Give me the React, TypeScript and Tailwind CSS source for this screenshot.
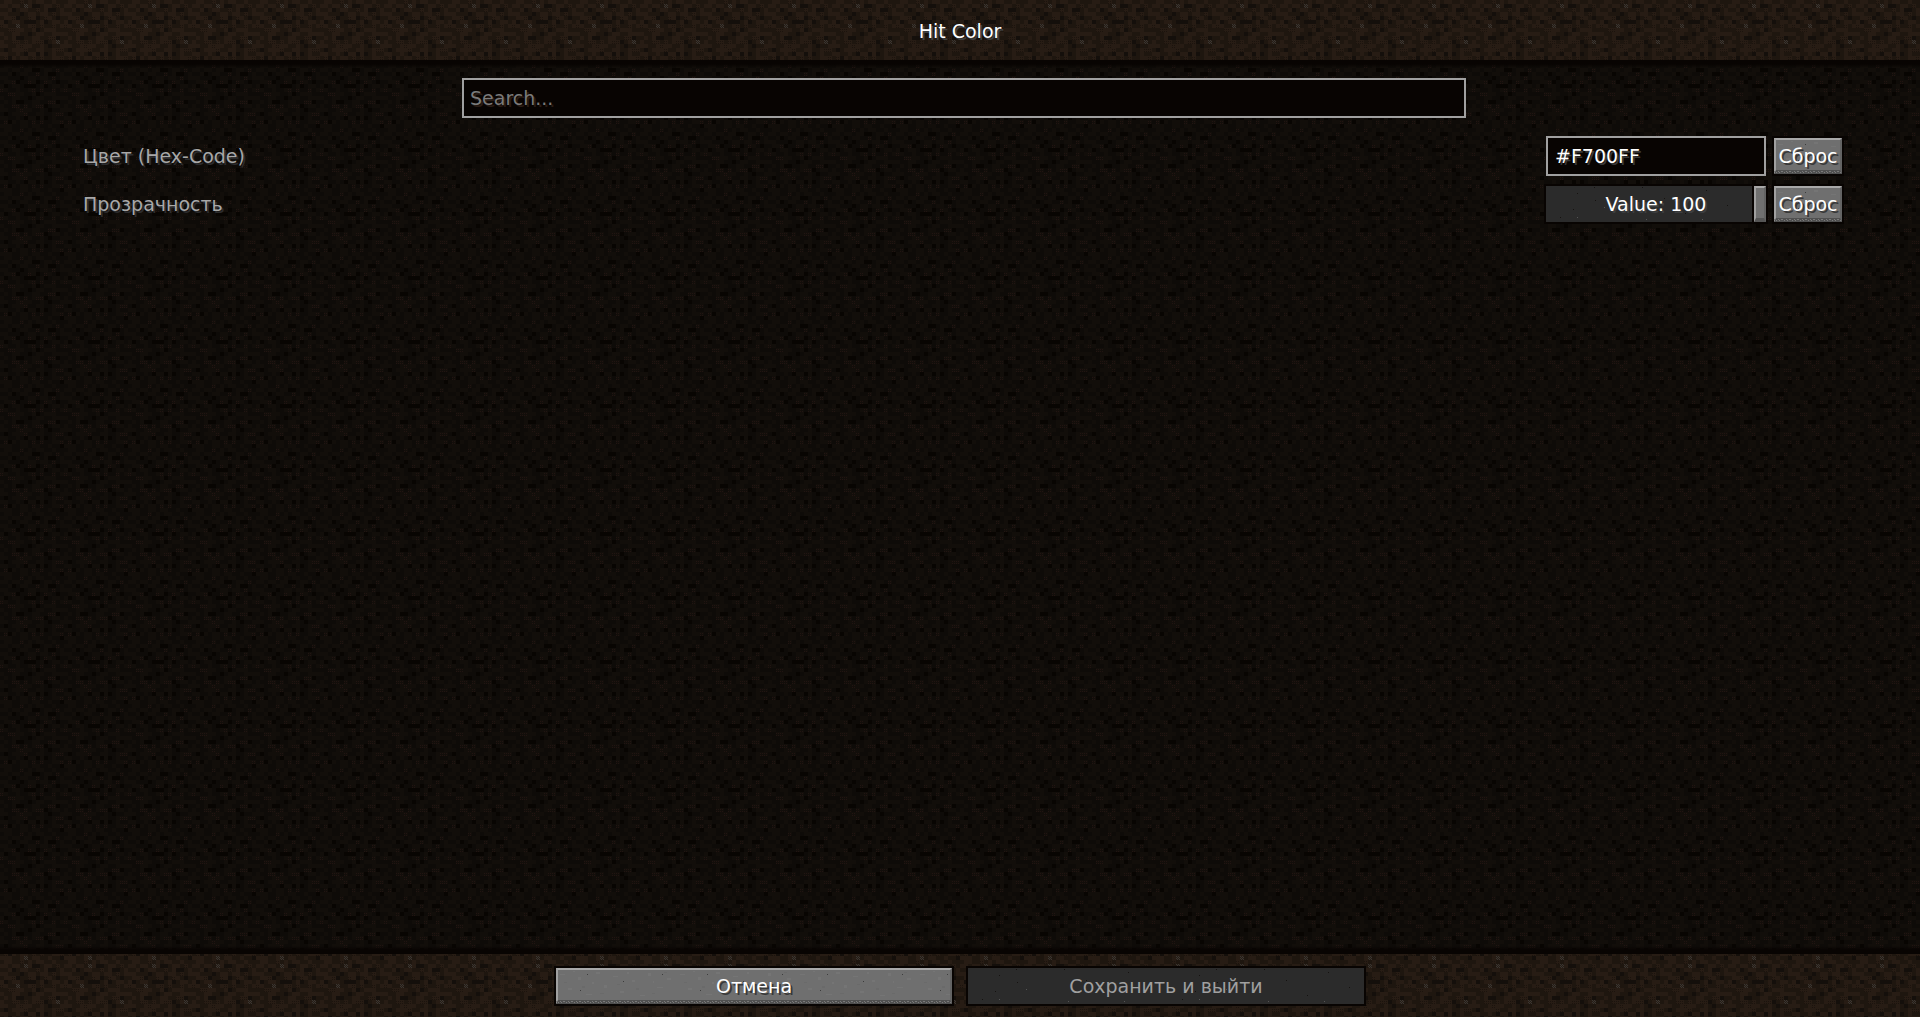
import { useState, type ReactNode } from 'react';

// d = dark, m = mid, l = light, s = stone speckle, r = dotted cell
const TILE = [
  'mllmmrmlmllmmlmm',
  'llmllmslddmllmrm',
  'mmldmllmmrmlddml',
  'llmmmdmllmllmrml',
  'mllrdmmrldmrlmdm',
  'ldmllmdddmldmllm',
  'rlmmsmmlrmrmmrml',
  'mmrrllmmldmlllmm',
  'lmmllmmdmllmmlll',
  'mlmlddmmllmmrrdm',
  'lmmrrmrmlrrdmlsm',
  'llmmlrllmmlmdmml',
  'mdmlllrmmllmmlrr',
  'llmmlmdlldldmlmm',
  'mrdlmllmrmrmmllr',
  'lllmmlsmllmmlmmd',
];

const LIT = { base: '#20170f', d: '#140f0b', m: '#1e160f', l: '#271c14', s: '#393632', r: '#1b130d' };
const DIM = { base: '#0f0c08', d: '#080502', m: '#0e0b08', l: '#120e0a', s: '#120e0a', r: '#211411' };

function cellColor(c: string, p: typeof LIT) {
  if (c === 'd') return p.d;
  if (c === 'm') return p.m;
  return p.l;
}

function Dirt({ id, dim, shift }: { id: string; dim: boolean; shift: number }) {
  const p = dim ? DIM : LIT;
  return (
    <svg aria-hidden="true" className="pointer-events-none absolute inset-0 h-full w-full" shapeRendering="crispEdges">
      <defs>
        <pattern id={id} y={shift} width="64" height="64" patternUnits="userSpaceOnUse">
          <rect width="64" height="64" fill={p.base} />
          {TILE.flatMap((row, y) =>
            [...row].map((c, x) => (
              <g key={`${x}-${y}`} transform={`translate(${x * 4} ${y * 4})`}>
                <rect width="4" height="4" fill={cellColor(c, p)} />
                {c === 's' && (
                  <path
                    d="M0 0h1v1h-1zM2 0h1v1h-1zM1 1h1v1h-1zM3 1h1v1h-1zM0 2h1v1h-1zM2 2h1v1h-1zM1 3h1v1h-1zM3 3h1v1h-1z"
                    fill={p.s}
                  />
                )}
                {c === 'r' && <path d="M0 1h1v1h-1zM2 1h1v1h-1zM0 3h1v1h-1zM2 3h1v1h-1z" fill={p.r} />}
              </g>
            )),
          )}
        </pattern>
      </defs>
      <rect width="100%" height="100%" fill={`url(#${id})`} />
    </svg>
  );
}

function Stone() {
  return (
    <svg aria-hidden="true" className="pointer-events-none absolute inset-0 h-full w-full" shapeRendering="crispEdges">
      <defs>
        <pattern id="stone" width="120" height="36" patternUnits="userSpaceOnUse">
          <path
            fill="#757575"
            d="M4 6h5v1h-5zM12 20h4v2h-4zM22 9h3v3h-3zM30 26h6v1h-6zM40 4h4v2h-4zM48 17h3v3h-3zM57 8h5v1h-5zM64 23h4v2h-4zM76 12h3v2h-3zM84 27h5v1h-5zM92 5h3v3h-3zM101 19h6v1h-6zM111 10h4v2h-4zM17 3h2v1h-2zM36 14h2v2h-2zM71 4h2v2h-2zM97 13h1v2h-1z"
          />
          <path
            fill="#6a6a6a"
            d="M8 14h3v1h-3zM26 18h3v2h-3zM44 25h4v1h-4zM61 16h3v1h-3zM80 20h3v2h-3zM96 25h3v1h-3zM108 4h3v1h-3z"
          />
          <path fill="#3c3c3c" d="M31 6h1v1h-1zM67 13h1v1h-1zM24 22h1v1h-1zM106 6h1v1h-1z" />
        </pattern>
      </defs>
      <rect width="100%" height="100%" fill="url(#stone)" />
    </svg>
  );
}

function Grit() {
  return (
    <svg aria-hidden="true" className="pointer-events-none absolute inset-x-0 bottom-0 h-1 w-full" shapeRendering="crispEdges">
      <defs>
        <pattern id="grit" width="8" height="4" patternUnits="userSpaceOnUse">
          <path fill="#7a7a7a" d="M0 1h1v1h-1zM2 2h1v1h-1zM4 1h1v1h-1zM5 2h1v1h-1zM7 1h1v1h-1z" />
        </pattern>
      </defs>
      <rect width="100%" height="100%" fill="url(#grit)" />
    </svg>
  );
}

function Specks() {
  return (
    <svg aria-hidden="true" className="pointer-events-none absolute inset-0 h-full w-full" shapeRendering="crispEdges">
      <defs>
        <pattern id="specks" width="200" height="36" patternUnits="userSpaceOnUse">
          <path
            fill="#151210"
            d="M14 31h1v1h-1zM31 7h1v1h-1zM48 1h1v1h-1zM49 14h1v1h-1zM27 23h1v1h-1zM96 1h1v1h-1zM139 27h1v1h-1zM160 4h1v1h-1zM181 19h1v1h-1zM118 12h1v1h-1z"
          />
          <path fill="#555555" d="M31 31h1v1h-1zM58 21h1v1h-1zM100 33h1v1h-1zM156 33h1v1h-1z" />
        </pattern>
      </defs>
      <rect width="100%" height="100%" fill="url(#specks)" />
    </svg>
  );
}

function StoneButton({ className, children }: { className: string; children: ReactNode }) {
  return (
    <button
      type="button"
      className={`relative flex h-9 items-center justify-center bg-[#6f6f6f] whitespace-nowrap text-white outline-2 outline-[#080402] [text-shadow:2px_2px_0_#383838] ${className}`}
    >
      <Stone />
      <span
        aria-hidden="true"
        className="absolute inset-0 border-2 border-b-4 border-t-[#a8a8a8] border-r-[#636363] border-b-[#505050] border-l-[#a0a0a0]"
      />
      <Grit />
      <span className="relative">{children}</span>
    </button>
  );
}

function Row({ id, label, children }: { id: string; label: string; children: ReactNode }) {
  return (
    <div className="flex h-12 items-center justify-between">
      <label htmlFor={id} className="text-[#a8a8a8] [text-shadow:2px_2px_0_#2c2c2e]">
        {label}
      </label>
      <div className="flex items-center gap-2">
        {children}
        <StoneButton className="w-[68px]">Сброс</StoneButton>
      </div>
    </div>
  );
}

export default function App() {
  const [opacity, setOpacity] = useState(100);
  return (
    <div className="relative flex min-h-screen flex-col bg-[#20170f] font-['DejaVu_Sans',sans-serif] text-[19px] leading-6">
      <Dirt id="dirt" dim={false} shift={0} />
      <header className="relative flex h-[60px] items-center justify-center pt-0.5">
        <h1 className="text-white [text-shadow:2px_2px_0_#3e4042]">Hit Color</h1>
      </header>
      <main className="relative flex grow flex-col">
        <Dirt id="dirt-dim" dim shift={4} />
        <div className="relative h-2 bg-linear-to-b from-[#080402] from-50% to-transparent" />
        <div className="relative mb-[14px] flex justify-center pt-[10px] pl-2">
          <input
            type="text"
            aria-label="Search"
            placeholder="Search..."
            className="h-10 w-[1004px] max-w-full border-2 border-[#a0a0a0] bg-[#080402] px-[6px] text-white outline-none [text-shadow:2px_2px_0_#2a1c14] placeholder:text-[#7b7b7b] placeholder:opacity-100"
          />
        </div>
        <div className="relative grow pr-[78px] pl-[83px]">
          <Row id="color" label="Цвет (Hex-Code)">
            <input
              id="color"
              type="text"
              defaultValue="#F700FF"
              className="h-10 w-[220px] border-2 border-[#a0a0a0] bg-[#080402] px-[7px] text-white outline-none [text-shadow:2px_2px_0_#383838]"
            />
          </Row>
          <Row id="opacity" label="Прозрачность">
            <div className="relative h-9 w-[220px] bg-[#2b2b2b] outline-2 outline-[#080402]">
              <Specks />
              <input
                id="opacity"
                type="range"
                min={0}
                max={100}
                value={opacity}
                onChange={(e) => setOpacity(Number(e.target.value))}
                className="relative block h-9 w-full appearance-none bg-transparent outline-none [&::-webkit-slider-thumb]:h-9 [&::-webkit-slider-thumb]:w-3 [&::-webkit-slider-thumb]:appearance-none [&::-webkit-slider-thumb]:border-2 [&::-webkit-slider-thumb]:border-b-4 [&::-webkit-slider-thumb]:border-t-[#a8a8a8] [&::-webkit-slider-thumb]:border-r-[#636363] [&::-webkit-slider-thumb]:border-b-[#555555] [&::-webkit-slider-thumb]:border-l-[#a0a0a0] [&::-webkit-slider-thumb]:bg-[#707070] [&::-webkit-slider-thumb]:shadow-[0_0_0_2px_#080402]"
              />
              <output
                htmlFor="opacity"
                className="pointer-events-none absolute inset-0 flex items-center justify-center text-white [text-shadow:2px_2px_0_#3c3e40]"
              >
                Value: {opacity}
              </output>
            </div>
          </Row>
        </div>
        <div className="relative h-2 bg-linear-to-t from-[#080402] from-50% to-transparent" />
      </main>
      <footer className="relative flex justify-center gap-4 px-4 pt-[14px] pb-[13px]">
        <StoneButton className="w-[396px]">Отмена</StoneButton>
        <button
          type="button"
          disabled
          className="relative flex h-9 w-[396px] items-center justify-center bg-[#2b2b2b] text-[#a0a0a0] outline-2 outline-[#080402]"
        >
          <Specks />
          <span className="relative">Сохранить и выйти</span>
        </button>
      </footer>
    </div>
  );
}
